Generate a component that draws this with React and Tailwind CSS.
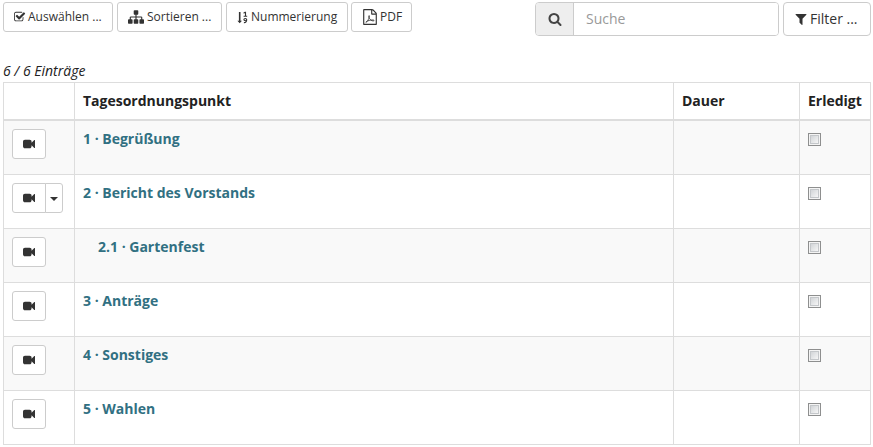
const glyphs = {
  check:
    'M1408 930v318q0 119-84.5 203.5t-203.5 84.5h-832q-119 0-203.5-84.5t-84.5-203.5v-832q0-119 84.5-203.5t203.5-84.5h832q63 0 117 25 15 7 18 23 3 17-9 29l-49 49q-10 10-23 10-3 0-9-2-23-6-45-6h-832q-66 0-113 47t-47 113v832q0 66 47 113t113 47h832q66 0 113-47t47-113v-254q0-13 9-22l64-64q10-10 23-10 6 0 12 3 20 8 20 29zm231-489l-814 814q-24 24-57 24t-57-24l-430-430q-24-24-24-57t24-57l110-110q24-24 57-24t57 24l263 263 647-647q24-24 57-24t57 24l110 110q24 24 24 57t-24 57z',
  sitemap:
    'M1792 1248v320q0 40-28 68t-68 28h-320q-40 0-68-28t-28-68v-320q0-40 28-68t68-28h96v-192h-512v192h96q40 0 68 28t28 68v320q0 40-28 68t-68 28h-320q-40 0-68-28t-28-68v-320q0-40 28-68t68-28h96v-192h-512v192h96q40 0 68 28t28 68v320q0 40-28 68t-68 28h-320q-40 0-68-28t-28-68v-320q0-40 28-68t68-28h96v-192q0-52 38-90t90-38h512v-192h-96q-40 0-68-28t-28-68v-320q0-40 28-68t68-28h320q40 0 68 28t28 68v320q0 40-28 68t-68 28h-96v192h512q52 0 90 38t38 90v192h96q40 0 68 28t28 68z',
  search:
    'M1216 832q0-185-131.5-316.5t-316.5-131.5-316.5 131.5-131.5 316.5 131.5 316.5 316.5 131.5 316.5-131.5 131.5-316.5zm512 832q0 52-38 90t-90 38q-54 0-90-38l-343-342q-179 124-399 124-143 0-273.5-55.5t-225-150-150-225-55.5-273.5 55.5-273.5 150-225 225-150 273.5-55.5 273.5 55.5 225 150 150 225 55.5 273.5q0 220-124 399l343 343q37 37 37 90z',
  filter:
    'M1595 295q17 41-14 70l-493 493v742q0 42-39 59-13 5-25 5-27 0-45-19l-256-256q-19-19-19-45v-486l-493-493q-31-29-14-70 17-39 59-39h1280q42 0 59 39z',
  video:
    'M1792 352v1088q0 42-39 59-13 5-25 5-27 0-45-19l-403-403v166q0 119-84.5 203.5t-203.5 84.5h-704q-119 0-203.5-84.5t-84.5-203.5v-704q0-119 84.5-203.5t203.5-84.5h704q119 0 203.5 84.5t84.5 203.5v165l403-402q18-19 45-19 12 0 25 5 39 17 39 59z',
};

function Glyph({ name, className }) {
  return (
    <svg viewBox="0 0 1792 1792" fill="currentColor" className={`shrink-0 ${className}`} aria-hidden="true">
      <path d={glyphs[name]} />
    </svg>
  );
}

function SortNumeric() {
  return (
    <svg viewBox="0 0 11 13" className="h-[13px] w-[11px] shrink-0" fill="currentColor" aria-hidden="true">
      <path d="M1.9 1h1.6v8.8H5L2.7 12.2 0.4 9.8h1.5z" />
      <path d="M6.6 2.2 8 1.3h.5v3.8M6.6 5.2h3.6" fill="none" stroke="currentColor" strokeWidth="1.1" />
      <path d="M9.7 8.6a1.4 1.1 0 1 1-2.8 0a1.4 1.1 0 1 1 2.8 0q.1 3.1-2.8 3" fill="none" stroke="currentColor" strokeWidth="1.1" />
    </svg>
  );
}

function FilePdf() {
  return (
    <svg viewBox="0 0 1792 1792" className="h-4 w-4 shrink-0" fill="currentColor" aria-hidden="true">
      <path d="M1596 380q28 28 48 76t20 88v1152q0 40-28 68t-68 28h-1344q-40 0-68-28t-28-68v-1600q0-40 28-68t68-28h896q40 0 88 20t76 48zm-444-244v376h376q-10-29-22-41l-313-313q-12-12-41-22zm384 1528v-1024h-416q-40 0-68-28t-28-68v-416h-768v1536h1280z" />
      <path
        d="M430 1480c80 30 190-130 270-290s170-400 110-440-80 90-20 220 190 300 330 340 250 20 240-30-180-60-390-30-470 110-540 230z"
        fill="none"
        stroke="currentColor"
        strokeWidth="95"
      />
    </svg>
  );
}

const buttonBox = 'flex items-center border border-[#ccc] bg-white text-[#333]';

function ToolButton({ className, children }) {
  return (
    <button className={`${buttonBox} h-[30px] rounded-[3px] pl-[10px] text-[12px] whitespace-nowrap ${className}`}>
      {children}
    </button>
  );
}

const rows = [
  { title: '1 · Begrüßung' },
  { title: '2 · Bericht des Vorstands', menu: true },
  { title: '2.1 · Gartenfest', child: true },
  { title: '3 · Anträge' },
  { title: '4 · Sonstiges' },
  { title: '5 · Wahlen' },
];

const cell = 'border-r border-b border-[#ddd] px-2 align-top';
const head = 'border-r border-b-2 border-[#ddd] p-2 text-left font-bold';

function Row({ item }) {
  return (
    <tr className="h-[54px] odd:bg-[#f9f9f9]">
      <td className={`${cell} border-l pt-2`}>
        <div className="flex">
          <button
            className={`${buttonBox} h-[30px] w-[34px] justify-center ${item.menu ? 'rounded-l-[3px]' : 'rounded-[3px]'}`}
            aria-label="Projektor"
          >
            <Glyph name="video" className="h-3 w-3" />
          </button>
          {item.menu && (
            <button className={`${buttonBox} -ml-px h-[30px] w-[18px] justify-center rounded-r-[3px]`} aria-label="Menü">
              <span className="mt-px border-x-4 border-t-4 border-x-transparent border-t-[#333]" />
            </button>
          )}
        </div>
      </td>
      <td className={`${cell} pt-2`}>
        <a className={`font-bold text-[#317082] ${item.child ? 'ml-[15px]' : ''}`}>{item.title}</a>
      </td>
      <td className={cell} />
      <td className={`${cell} pt-3`}>
        <div className="h-[13px] w-[13px] border border-[#8e8f8f] bg-[#f4f4f4] p-px">
          <div className="h-full w-full border border-[#c4c7ca] bg-linear-to-br from-[#d2d5d8] to-[#f6f6f6]" />
        </div>
      </td>
    </tr>
  );
}

export default function App() {
  return (
    <div className="h-[447px] w-[873px] overflow-hidden bg-white pt-0.5 pl-[3px] font-['Open_Sans',sans-serif] text-[14px] leading-5 text-[#222]">
      <div className="flex h-[34px] w-[868px] items-start">
        <ToolButton className="w-[110px]">
          <Glyph name="check" className="mr-[2px] h-3 w-3" />
          Auswählen ...
        </ToolButton>
        <ToolButton className="ml-1 w-[105px]">
          <Glyph name="sitemap" className="mr-[3px] h-4 w-4" />
          Sortieren ...
        </ToolButton>
        <ToolButton className="ml-1 w-[122px]">
          <SortNumeric />
          <span className="ml-[3px]">Nummerierung</span>
        </ToolButton>
        <ToolButton className="ml-[3px] w-[61px] pl-[9px]">
          <FilePdf />
          <span className="ml-0.5">PDF</span>
        </ToolButton>
        <div className="ml-auto flex h-[34px] w-[244px] overflow-hidden rounded-[4px] border border-[#ccc]">
          <div className="flex w-[38px] items-center justify-center border-r border-[#ccc] bg-[#eee] text-[#444]">
            <Glyph name="search" className="h-[14px] w-[14px]" />
          </div>
          <input
            className="min-w-0 flex-1 bg-white px-3 text-[14px] outline-none placeholder:text-[#999]"
            placeholder="Suche"
          />
        </div>
        <button className={`${buttonBox} ml-1 h-[34px] w-[88px] rounded-[4px] pl-[10px] text-[14px] whitespace-nowrap`}>
          <Glyph name="filter" className="mr-[2px] h-[14px] w-[14px]" />
          Filter ...
        </button>
      </div>
      <div className="mt-[25px] h-[21px] text-[14px] italic">6 / 6 Einträge</div>
      <table className="w-[868px] table-fixed border-separate border-spacing-0">
        <colgroup>
          <col className="w-[72px]" />
          <col className="w-[599px]" />
          <col className="w-[126px]" />
          <col className="w-[71px]" />
        </colgroup>
        <thead>
          <tr>
            <th className={`${head} border-t border-l`} />
            <th className={`${head} border-t`}>Tagesordnungspunkt</th>
            <th className={`${head} border-t`}>Dauer</th>
            <th className={`${head} border-t`}>Erledigt</th>
          </tr>
        </thead>
        <tbody>
          {rows.map((item) => (
            <Row key={item.title} item={item} />
          ))}
        </tbody>
      </table>
    </div>
  );
}
